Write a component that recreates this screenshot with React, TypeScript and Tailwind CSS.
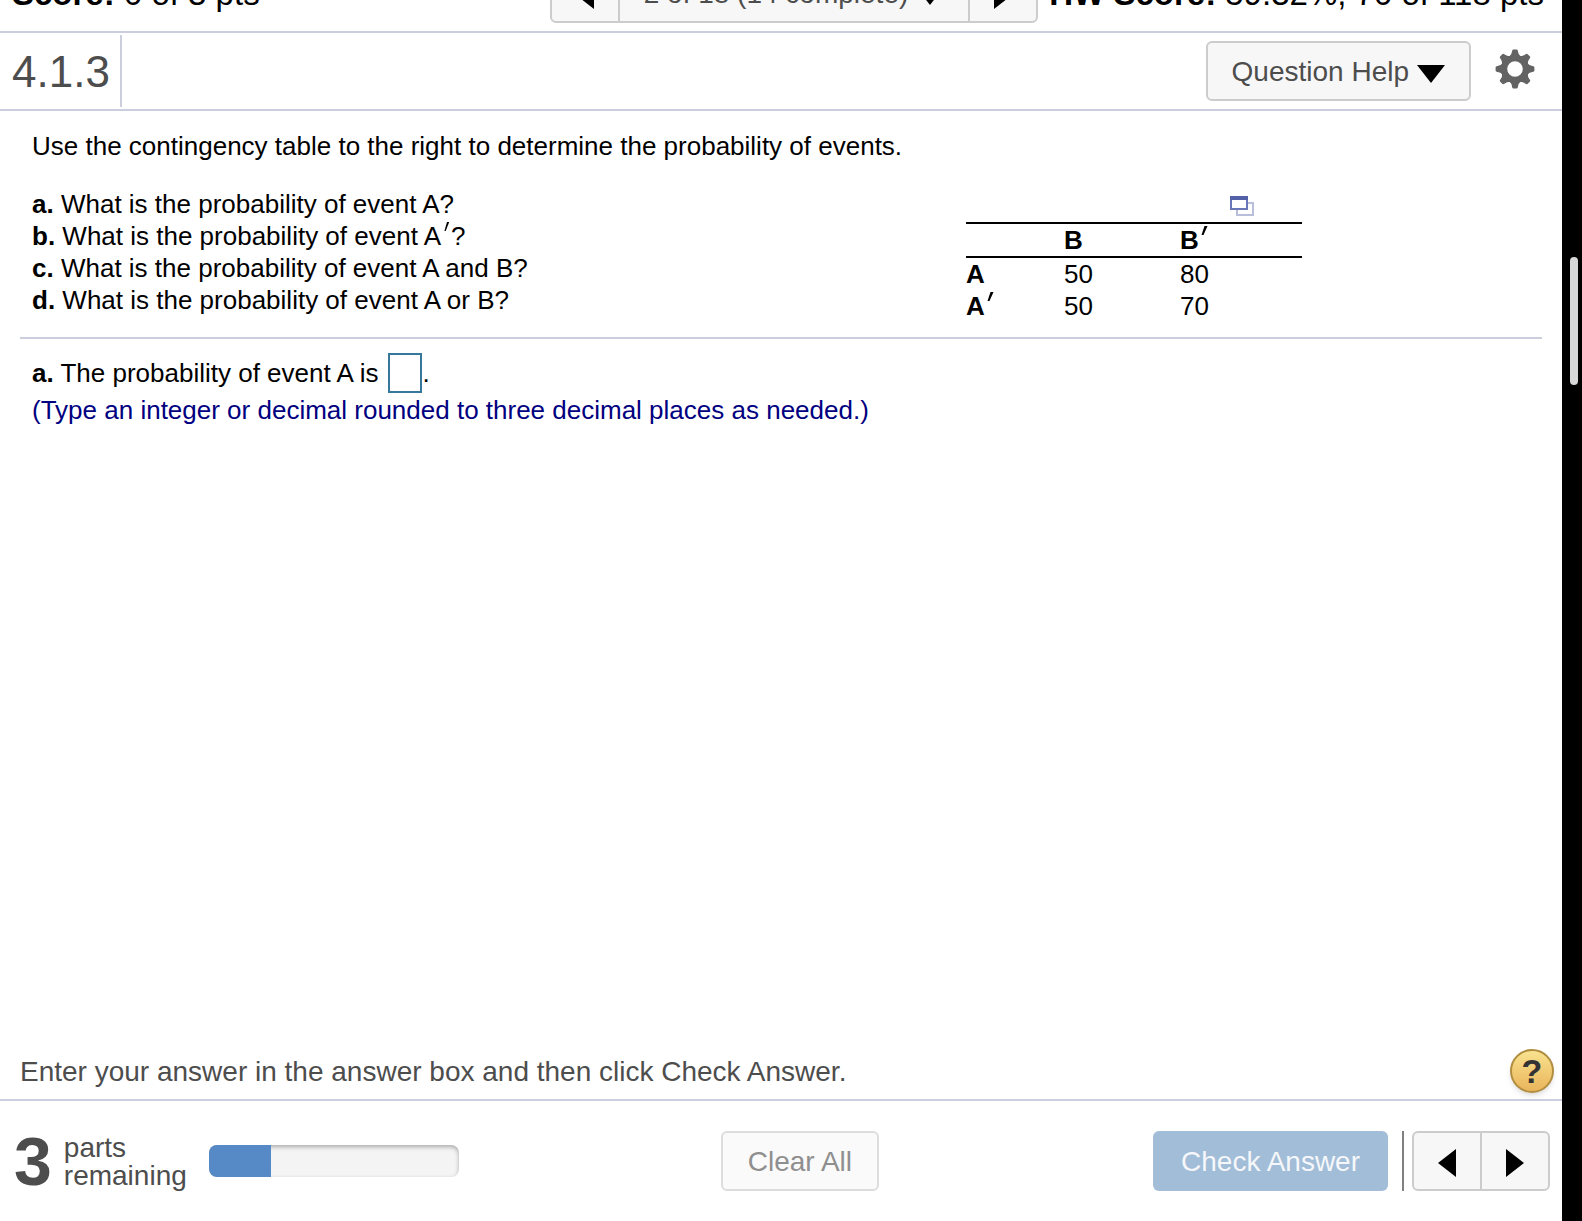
import type { ReactNode } from "react";

const questions: { part: string; text: ReactNode }[] = [
  { part: "a.", text: "What is the probability of event A?" },
  {
    part: "b.",
    text: (
      <>
        What is the probability of event A
        <Prime />?
      </>
    ),
  },
  { part: "c.", text: "What is the probability of event A and B?" },
  { part: "d.", text: "What is the probability of event A or B?" },
];

function Prime({ bold = false }: { bold?: boolean }) {
  return (
    <svg
      className="inline-block h-3 w-2 mx-px -translate-y-[11px]"
      viewBox="0 0 8 12"
      aria-label="prime"
    >
      <path
        d={bold ? "M4.5 1h3L3.5 10h-2z" : "M5 1h2.200L3.700 10H2.400z"}
        fill="#000"
      />
    </svg>
  );
}

function Triangle({ dir }: { dir: "left" | "right" }) {
  return (
    <svg className="h-7 w-[18px]" viewBox="0 0 18 28" aria-hidden="true">
      <path d={dir === "left" ? "M18 0v28L0 14z" : "M0 0v28l18-14z"} />
    </svg>
  );
}

function DownTriangle() {
  return (
    <svg className="mt-1 h-[18px] w-7" viewBox="0 0 28 18" aria-hidden="true">
      <path d="M0 0h28L14 18z" />
    </svg>
  );
}

function Gear() {
  return (
    <svg className="size-10" viewBox="-20 -20 40 40" aria-hidden="true">
      <g fill="#636363">
        {[0, 45, 90, 135, 180, 225, 270, 315].map((angle) => (
          <path
            key={angle}
            d="M-6-12Q-3.200-14.500-3-17.500Q-2.800-19.400-1.800-19.400H1.800Q2.800-19.400 3-17.500Q3.200-14.500 6-12z"
            transform={`rotate(${angle})`}
          />
        ))}
        <path
          fillRule="evenodd"
          d="M0-14a14 14 0 1 1 0 28a14 14 0 1 1 0-28zM0-7.800a7.800 7.800 0 1 0 0 15.600a7.800 7.800 0 1 0 0-15.600z"
        />
      </g>
    </svg>
  );
}

function PopupIcon() {
  return (
    <svg className="h-5 w-6" viewBox="0 0 24 20" aria-hidden="true">
      <path
        d="M18 7h5v12H7v-5"
        fill="none"
        stroke="#b9bedb"
        strokeWidth="2"
      />
      <path d="M1 1h16v12H1z" fill="#fff" stroke="#6b78b8" strokeWidth="2" />
      <path d="M0 0h18v4H0z" fill="#5361a8" />
    </svg>
  );
}

function TopBar() {
  return (
    <div className="flex h-[31px] shrink-0 items-end overflow-hidden text-[33px] leading-10 text-black">
      <p className="flex-1 pl-3 pb-[17px] whitespace-nowrap">
        <b>Score:</b> 0 of 3 pts
      </p>
      <div className="mb-2 flex h-[60px] shrink-0 rounded-md border-2 border-[#cccccc] bg-[#f7f7f7] text-[28px] text-[#4d4d4d]">
        <button className="flex w-[66px] items-center justify-center pt-1" aria-label="Previous question">
          <Triangle dir="left" />
        </button>
        <button className="flex w-[352px] items-center justify-center gap-2 border-x-2 border-[#cccccc] pt-0.5 whitespace-nowrap">
          2 of 18 (14 complete)
          <DownTriangle />
        </button>
        <button className="flex w-[66px] items-center justify-center pt-1" aria-label="Next question">
          <Triangle dir="right" />
        </button>
      </div>
      <p className="w-[524px] shrink-0 pr-[18px] pb-[17px] text-right whitespace-nowrap">
        <b>HW Score:</b> 59.32%, 70 of 118 pts
      </p>
    </div>
  );
}

function ExerciseHeader() {
  return (
    <header className="flex h-20 shrink-0 items-center border-y-2 border-[#cbcfdd] text-[#4d4d4d]">
      <h1 className="flex h-[72px] items-center border-r-2 border-[#cbcfdd] pt-0.5 pr-2.5 pl-3 text-[44px]">
        4.1.3
      </h1>
      <button className="ml-auto flex h-[60px] items-center gap-2 rounded-md border-2 border-[#cccccc] bg-[#f7f7f7] px-6 pt-0.5 text-[28px]">
        Question Help
        <DownTriangle />
      </button>
      <button className="mr-[27px] mb-1 ml-6" aria-label="Settings">
        <Gear />
      </button>
    </header>
  );
}

function ContingencyTable() {
  return (
    <div className="mr-60 w-[336px] shrink-0">
      <div className="flex h-[34px] items-end justify-end pr-12 pb-1.5">
        <button aria-label="Open table in a new window">
          <PopupIcon />
        </button>
      </div>
      <table className="w-full table-fixed border-collapse text-left leading-8">
        <thead className="border-y-2 border-black">
          <tr>
            <td className="w-[98px]" />
            <th scope="col" className="w-[116px]">B</th>
            <th scope="col">
              B<Prime bold />
            </th>
          </tr>
        </thead>
        <tbody>
          <tr>
            <th scope="row">A</th>
            <td>50</td>
            <td>80</td>
          </tr>
          <tr>
            <th scope="row">
              A<Prime bold />
            </th>
            <td>50</td>
            <td>70</td>
          </tr>
        </tbody>
      </table>
    </div>
  );
}

function Exercise() {
  return (
    <main className="flex-1 px-5 pt-[19px] text-[26px] leading-8 text-black">
      <p className="px-3">
        Use the contingency table to the right to determine the probability of
        events.
      </p>
      <div className="mt-[26px] flex items-start justify-between border-b-2 border-[#cbcfdd] pb-[15px] pl-3">
        <ul>
          {questions.map((q) => (
            <li key={q.part}>
              <b>{q.part}</b> {q.text}
            </li>
          ))}
        </ul>
        <ContingencyTable />
      </div>
      <div className="px-3 pt-3.5">
        <div className="flex h-10 items-center">
          <label htmlFor="answer">
            <b>a.</b> The probability of event A is
          </label>
          <input
            id="answer"
            className="ml-2.5 h-10 w-[34px] border-2 border-[#35789b] bg-white"
          />
          .
        </div>
        <p className="mt-px text-[#000080]">
          (Type an integer or decimal rounded to three decimal places as needed.)
        </p>
      </div>
    </main>
  );
}

function Footer() {
  return (
    <footer className="shrink-0 text-[28px] text-[#4d4d4d]">
      <div className="flex items-center justify-between border-b-2 border-[#cbcfdd] pr-2 pb-1.5 pl-5">
        <p className="pt-0.5">
          Enter your answer in the answer box and then click Check Answer.
        </p>
        <button
          className="flex size-11 items-center justify-center rounded-full border-2 border-[#b08d3f] bg-linear-to-b from-[#f9e28f] to-[#e9b55a] text-[34px] font-bold text-[#333333] shadow-md"
          aria-label="Help"
        >
          ?
        </button>
      </div>
      <div className="flex h-[120px] items-center pr-3 pl-3.5">
        <span className="text-[68px] leading-none font-bold">3</span>
        <span className="ml-3 pt-0.5 leading-7">
          parts
          <br />
          remaining
        </span>
        <div className="ml-[22px] h-8 w-[250px] overflow-hidden rounded-lg bg-[#f4f4f4] shadow-[inset_0_2px_4px_#aaaaaa]">
          <div className="h-full w-1/4 bg-[#568ac6]" />
        </div>
        <button className="mr-[274px] ml-auto h-[60px] rounded-md border-2 border-[#dddddd] bg-[#fafafa] px-[25px] pt-0.5 text-[#8f8f8f]">
          Clear All
        </button>
        <button className="h-[60px] rounded-md bg-[#a2bdd7] px-7 pt-0.5 text-[#f5f7fa]">
          Check Answer
        </button>
        <div className="mr-2 ml-3.5 h-[60px] w-0.5 bg-[#808080]" />
        <div className="flex h-[60px] rounded-md border-2 border-[#cccccc] bg-[#f7f7f7]">
          <button className="flex w-[66px] items-center justify-center pt-1" aria-label="Previous">
            <Triangle dir="left" />
          </button>
          <button
            className="flex w-[68px] items-center justify-center border-l-2 border-[#cccccc] pt-1"
            aria-label="Next"
          >
            <Triangle dir="right" />
          </button>
        </div>
      </div>
    </footer>
  );
}

export default function App() {
  return (
    <div className="flex h-screen bg-white font-['Liberation_Sans',Arial,sans-serif]">
      <div className="flex min-w-0 flex-1 flex-col">
        <TopBar />
        <ExerciseHeader />
        <Exercise />
        <Footer />
      </div>
      <div className="w-5 shrink-0 bg-black pt-[257px] pl-2">
        <div className="h-32 w-2 rounded-full bg-[#d8d8d8]" />
      </div>
    </div>
  );
}
